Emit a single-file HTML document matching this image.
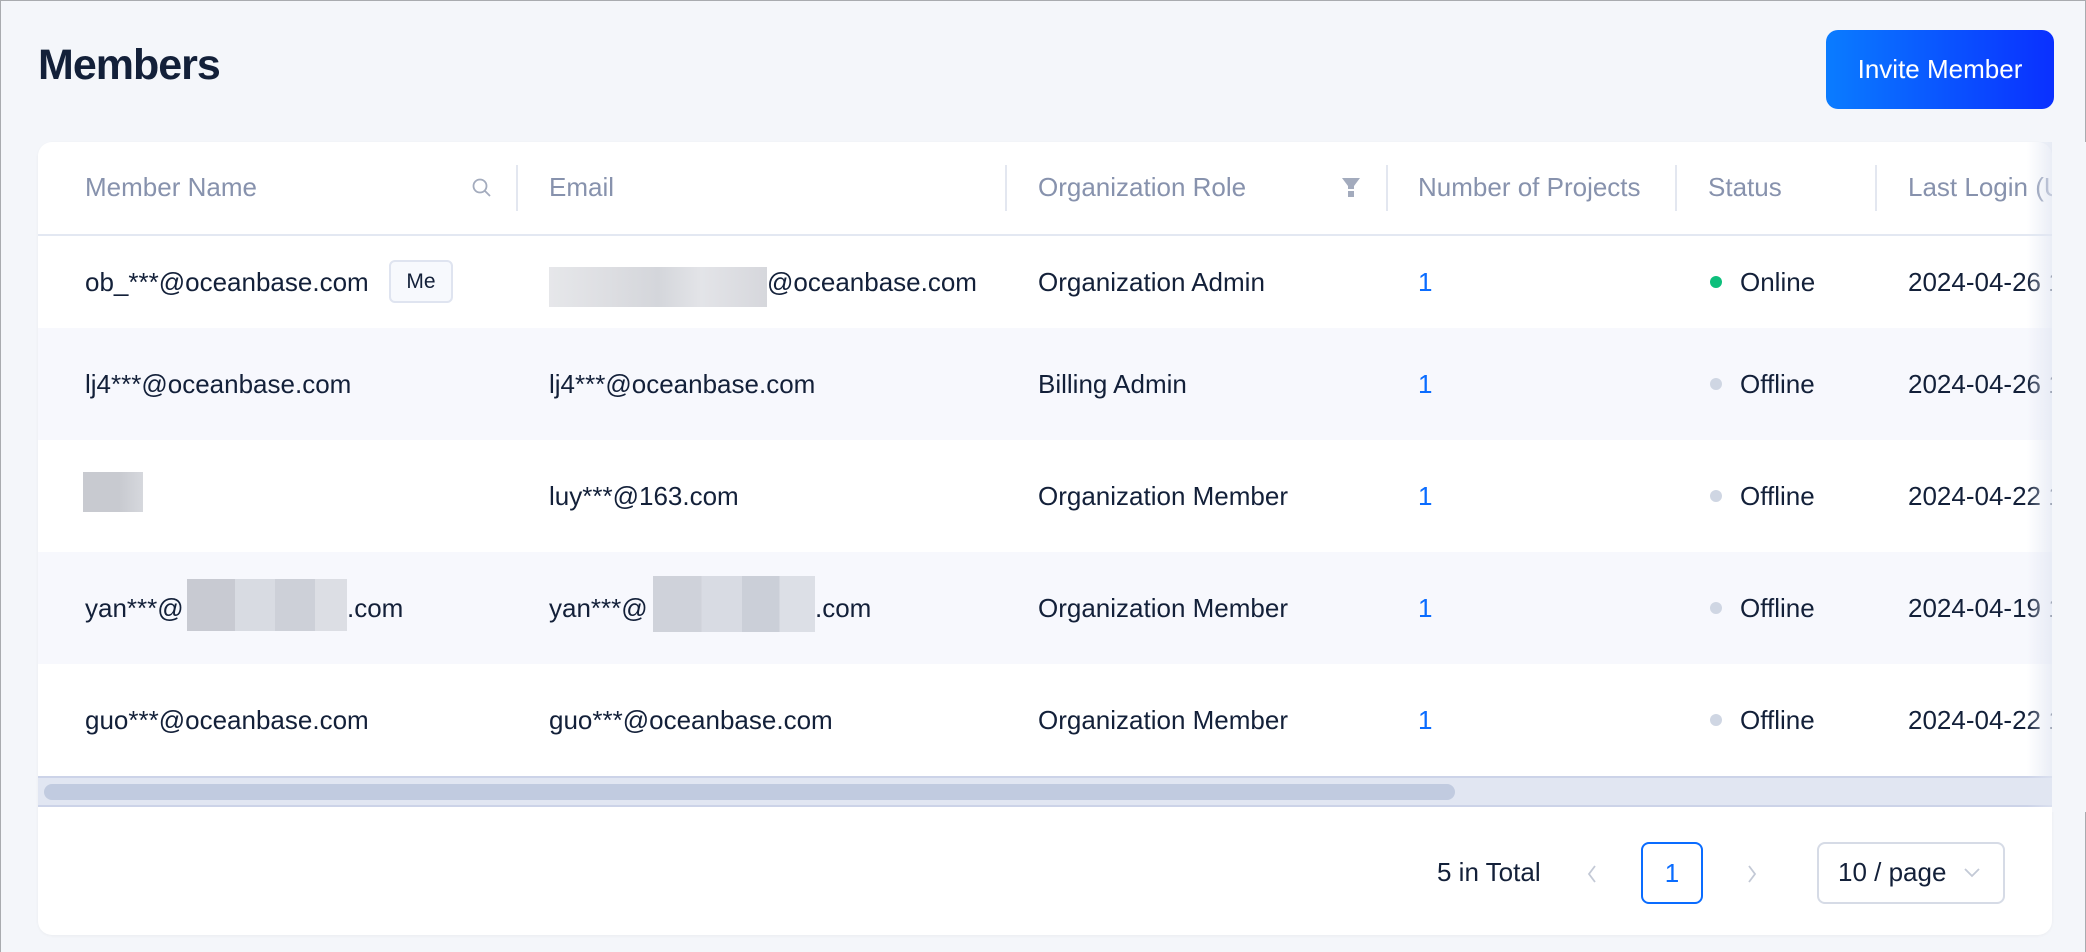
<!DOCTYPE html>
<html><head><meta charset="utf-8"><style>
*{margin:0;padding:0;box-sizing:border-box}
body{width:2086px;height:952px;background:#f4f6fa;font-family:"Liberation Sans",sans-serif;position:relative;overflow:hidden;border:1px solid #a9abaf;border-bottom:none;color:#132039}
.a{position:absolute;white-space:nowrap}
h1{position:absolute;left:37px;top:40px;font-size:43px;font-weight:bold;color:#132039;letter-spacing:-1px}
.btn{left:1825px;top:29px;width:228px;height:79px;border-radius:12px;background:linear-gradient(90deg,#0a7cff,#0a30ff);color:#fff;font-size:26px;display:flex;align-items:center;justify-content:center}
.card{left:37px;top:141px;width:2014px;height:793px;background:#fff;border-radius:14px;overflow:hidden;box-shadow:0 1px 3px rgba(0,0,0,.04)}
.th{font-size:26px;color:#8792ad;top:171px}
.sep{width:2px;height:46px;top:164px;background:#e3e7f0}
.row{left:37px;width:2014px}
.td{font-size:26px;color:#132039}
.blue{color:#0a6cff}
.dot{width:12px;height:12px;border-radius:50%}
.blur{background:#d3d6dd}
</style></head><body>
<h1>Members</h1>
<div class="a btn">Invite Member</div>
<div class="a card"></div>
<div class="a row" style="top:233px;height:2px;background:#e3e8f2"></div>
<div class="a row" style="top:327px;height:112px;background:#f7f8fd"></div>
<div class="a row" style="top:551px;height:112px;background:#f7f8fd"></div>

<div class="a th" style="left:84px">Member Name</div>
<svg class="a" style="left:469px;top:175px" width="24" height="24" viewBox="0 0 24 24"><circle cx="10" cy="10" r="6.5" fill="none" stroke="#a3abbd" stroke-width="1.8"/><path d="M15 15l5 5" stroke="#a3abbd" stroke-width="1.8"/></svg>
<div class="a sep" style="left:515px"></div>
<div class="a th" style="left:548px">Email</div>
<div class="a sep" style="left:1004px"></div>
<div class="a th" style="left:1037px">Organization Role</div>
<svg class="a" style="left:1340px;top:176px" width="20" height="22" viewBox="0 0 20 22"><path d="M1 1h18l-6 8v3H7V9z" fill="#a3abbd"/><rect x="7" y="14" width="6" height="6" fill="#a3abbd"/></svg>
<div class="a sep" style="left:1385px"></div>
<div class="a th" style="left:1417px">Number of Projects</div>
<div class="a sep" style="left:1674px"></div>
<div class="a th" style="left:1707px">Status</div>
<div class="a sep" style="left:1874px"></div>
<div class="a th" style="left:1907px">Last Login (U</div>

<!-- row1 -->
<div class="a td" style="left:84px;top:266px">ob_***@oceanbase.com</div>
<div class="a" style="left:388px;top:259px;width:64px;height:43px;border:2px solid #dfe4f0;border-radius:6px;background:#f7f9fd;font-size:21px;display:flex;align-items:center;justify-content:center">Me</div>
<div class="a blur" style="left:548px;top:266px;width:218px;height:40px;background:linear-gradient(90deg,#e6e7ea,#dcdde1 30%,#d4d6db 50%,#e3e4e8 70%,#d6d7dc)"></div>
<div class="a td" style="left:766px;top:266px">@oceanbase.com</div>
<div class="a td" style="left:1037px;top:266px">Organization Admin</div>
<div class="a td blue" style="left:1417px;top:266px">1</div>
<div class="a dot" style="left:1709px;top:275px;background:#0dbf7c"></div>
<div class="a td" style="left:1739px;top:266px">Online</div>
<div class="a td" style="left:1907px;top:266px">2024-04-26 1</div>
<!-- row2 -->
<div class="a td" style="left:84px;top:368px">lj4***@oceanbase.com</div>
<div class="a td" style="left:548px;top:368px">lj4***@oceanbase.com</div>
<div class="a td" style="left:1037px;top:368px">Billing Admin</div>
<div class="a td blue" style="left:1417px;top:368px">1</div>
<div class="a dot" style="left:1709px;top:377px;background:#cfd6e3"></div>
<div class="a td" style="left:1739px;top:368px">Offline</div>
<div class="a td" style="left:1907px;top:368px">2024-04-26 1</div>
<!-- row3 -->
<div class="a blur" style="left:82px;top:471px;width:60px;height:40px;background:linear-gradient(90deg,#c8cad0 60%,#d6d8dd)"></div>
<div class="a td" style="left:548px;top:480px">luy***@163.com</div>
<div class="a td" style="left:1037px;top:480px">Organization Member</div>
<div class="a td blue" style="left:1417px;top:480px">1</div>
<div class="a dot" style="left:1709px;top:489px;background:#cfd6e3"></div>
<div class="a td" style="left:1739px;top:480px">Offline</div>
<div class="a td" style="left:1907px;top:480px">2024-04-22 1</div>
<!-- row4 -->
<div class="a td" style="left:84px;top:592px">yan***@</div>
<div class="a blur" style="left:186px;top:578px;width:160px;height:52px;background:linear-gradient(90deg,#c8cad2 30%,#d8dbe2 30%,#d8dbe2 55%,#cdd0d8 55%,#cdd0d8 80%,#dcdee4 80%)"></div>
<div class="a td" style="left:346px;top:592px">.com</div>
<div class="a td" style="left:548px;top:592px">yan***@</div>
<div class="a blur" style="left:652px;top:575px;width:162px;height:56px;background:linear-gradient(90deg,#cfd2da 30%,#d8dbe3 30%,#d8dbe3 55%,#cbcfd8 55%,#cbcfd8 78%,#dcdfe6 78%)"></div>
<div class="a td" style="left:814px;top:592px">.com</div>
<div class="a td" style="left:1037px;top:592px">Organization Member</div>
<div class="a td blue" style="left:1417px;top:592px">1</div>
<div class="a dot" style="left:1709px;top:601px;background:#cfd6e3"></div>
<div class="a td" style="left:1739px;top:592px">Offline</div>
<div class="a td" style="left:1907px;top:592px">2024-04-19 1</div>
<!-- row5 -->
<div class="a td" style="left:84px;top:704px">guo***@oceanbase.com</div>
<div class="a td" style="left:548px;top:704px">guo***@oceanbase.com</div>
<div class="a td" style="left:1037px;top:704px">Organization Member</div>
<div class="a td blue" style="left:1417px;top:704px">1</div>
<div class="a dot" style="left:1709px;top:713px;background:#cfd6e3"></div>
<div class="a td" style="left:1739px;top:704px">Offline</div>
<div class="a td" style="left:1907px;top:704px">2024-04-22 1</div>

<!-- scrollbar -->
<div class="a row" style="top:775px;height:31px;background:#e1e6f2;border-top:2px solid #ccd3e8;border-bottom:2px solid #ccd3e8"></div>
<div class="a" style="left:43px;top:783px;width:1411px;height:16px;border-radius:8px;background:#c1cbe0"></div>
<div class="a" style="left:2026px;top:141px;width:25px;height:665px;background:linear-gradient(90deg,rgba(235,238,246,0),rgba(225,230,242,.7))"></div>
<div class="a" style="left:2051px;top:141px;width:35px;height:670px;background:#f4f6fa"></div>

<!-- pagination -->
<div class="a td" style="left:1436px;top:856px">5 in Total</div>
<svg class="a" style="left:1584px;top:862px" width="14" height="22" viewBox="0 0 14 22"><path d="M10 3L4 11l6 8" fill="none" stroke="#c3c9d6" stroke-width="1.8"/></svg>
<div class="a" style="left:1640px;top:841px;width:62px;height:62px;border:2px solid #0a6cff;border-radius:8px;color:#0a6cff;font-size:26px;display:flex;align-items:center;justify-content:center">1</div>
<svg class="a" style="left:1744px;top:862px" width="14" height="22" viewBox="0 0 14 22"><path d="M4 3l6 8-6 8" fill="none" stroke="#c3c9d6" stroke-width="1.8"/></svg>
<div class="a" style="left:1816px;top:841px;width:188px;height:62px;border:2px solid #d6dbe6;border-radius:8px"></div>
<div class="a td" style="left:1837px;top:856px">10 / page</div>
<svg class="a" style="left:1962px;top:866px" width="18" height="12" viewBox="0 0 18 12"><path d="M2 2l7 7 7-7" fill="none" stroke="#c3c9d6" stroke-width="1.8"/></svg>
</body></html>
